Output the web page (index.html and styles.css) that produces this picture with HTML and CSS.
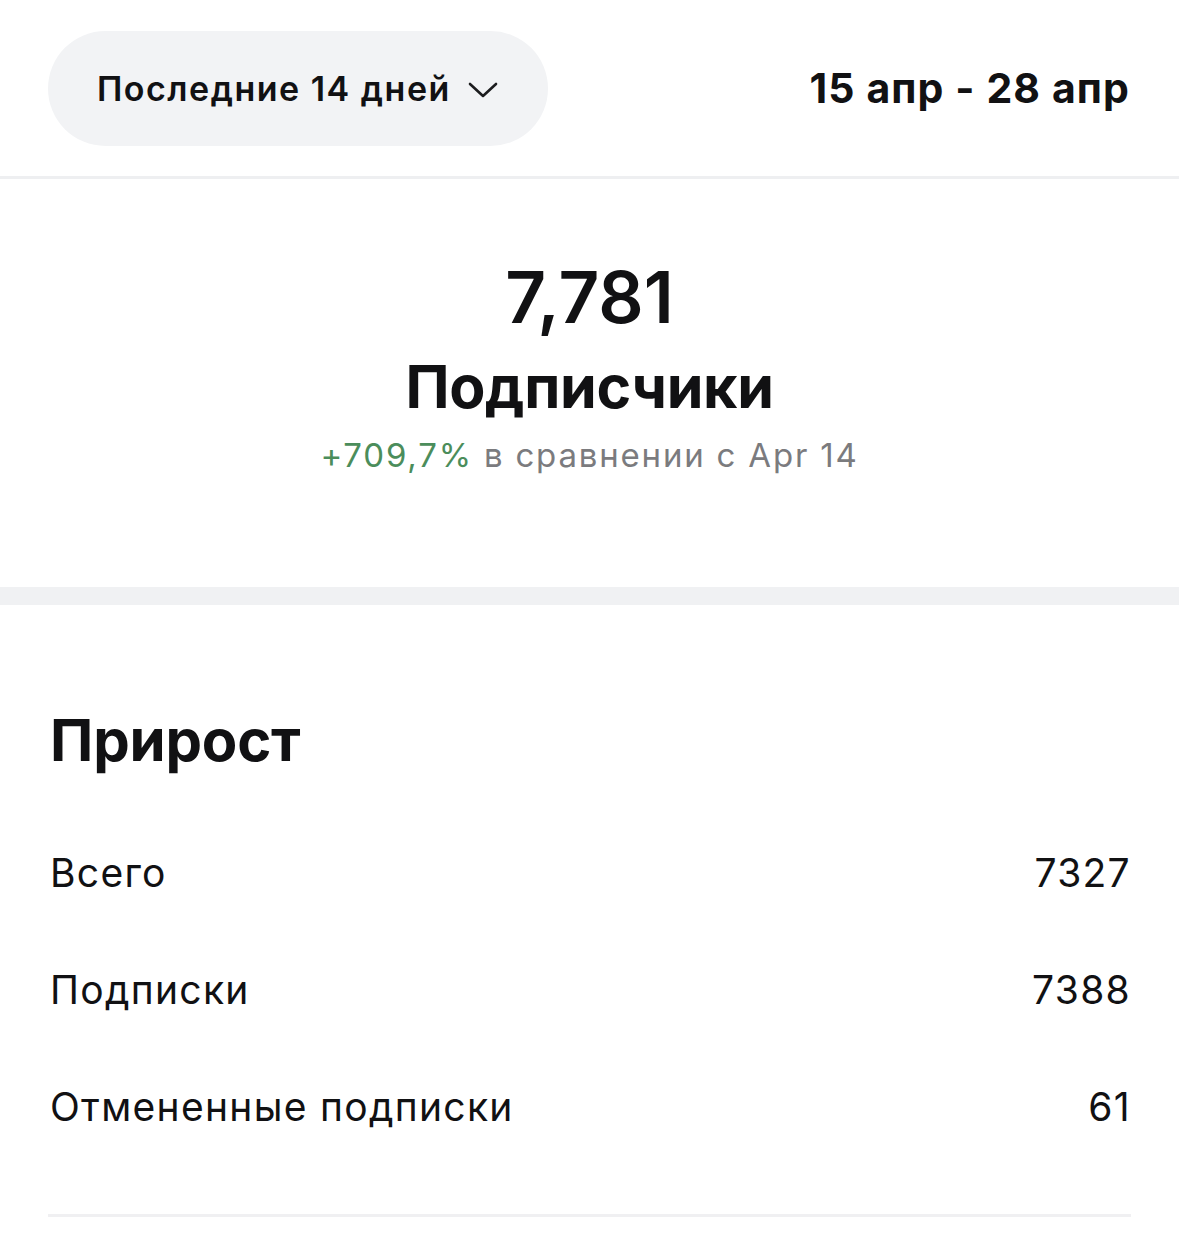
FILE: index.html
```html
<!DOCTYPE html>
<html lang="ru">
<head>
    <meta charset="UTF-8">
    <meta name="viewport" content="width=device-width, initial-scale=1.0">
    <title>Подписчики</title>
    <link rel="stylesheet" href="styles.css">
</head>
<body>
    <div class="header">
        <button class="period">
            <span>Последние 14 дней</span>
            <svg class="chevron" width="30" height="16" viewBox="0 0 30 16">
                <path d="M2 2 L15 14 L28 2" fill="none" stroke="#1c1c1e" stroke-width="2.6" stroke-linecap="round" stroke-linejoin="round"/>
            </svg>
        </button>
        <div class="range">15 апр - 28 апр</div>
    </div>

    <div class="summary">
        <div class="total">7,781</div>
        <div class="title">Подписчики</div>
        <div class="compare"><span class="up">+709,7%</span> в сравнении с Apr 14</div>
    </div>

    <div class="band"></div>

    <div class="growth">
        <h2>Прирост</h2>
        <div class="row"><span>Всего</span><span>7327</span></div>
        <div class="row"><span>Подписки</span><span>7388</span></div>
        <div class="row"><span>Отмененные подписки</span><span>61</span></div>
        <div class="divider"></div>
    </div>
</body>
</html>
```

FILE: styles.css
```css
body {
    margin: 0;
    font-family: Inter, "Noto Sans", sans-serif;
    color: #111113;
    background: #ffffff;
}
.header {
    height: 176px;
    display: flex;
    align-items: center;
    justify-content: space-between;
    padding: 0 49px 0 48px;
    border-bottom: 3px solid #eeeff1;
}
.period {
    height: 115px;
    padding: 0 50px 0 49px;
    display: flex;
    align-items: center;
    gap: 17px;
    background: #f2f3f5;
    border: none;
    border-radius: 58px;
    font-family: inherit;
    font-size: 34px;
    font-weight: 600;
    letter-spacing: 1.5px;
    color: #111113;
    margin-top: 1px;
}
.chevron {
    margin-top: 2px;
}
.range {
    font-size: 41px;
    font-weight: 700;
    letter-spacing: 1.1px;
}
.summary {
    height: 408px;
    display: flex;
    flex-direction: column;
    align-items: center;
    padding-top: 78px;
    box-sizing: border-box;
}
.total {
    font-size: 71px;
    font-weight: 600;
    line-height: 80px;
}
.title {
    font-size: 59px;
    font-weight: 700;
    line-height: 70px;
    margin-top: 15px;
    letter-spacing: -0.3px;
}
.compare {
    font-size: 33px;
    color: #7b7b7e;
    line-height: 40px;
    margin-top: 13px;
    letter-spacing: 1.8px;
}
.up {
    color: #4b8d5b;
}
.band {
    height: 18px;
    background: #f0f1f3;
}
.growth {
    padding: 95px 48px 0 50px;
}
.growth h2 {
    margin: 0 0 34px;
    font-size: 58px;
    font-weight: 700;
    line-height: 80px;
    letter-spacing: -0.2px;
}
.row {
    height: 117px;
    display: flex;
    justify-content: space-between;
    align-items: center;
    font-size: 39px;
    letter-spacing: 1.3px;
}
.divider {
    height: 3px;
    background: #f0f0f2;
    margin-top: 49px;
    margin-left: -2px;
}
```
